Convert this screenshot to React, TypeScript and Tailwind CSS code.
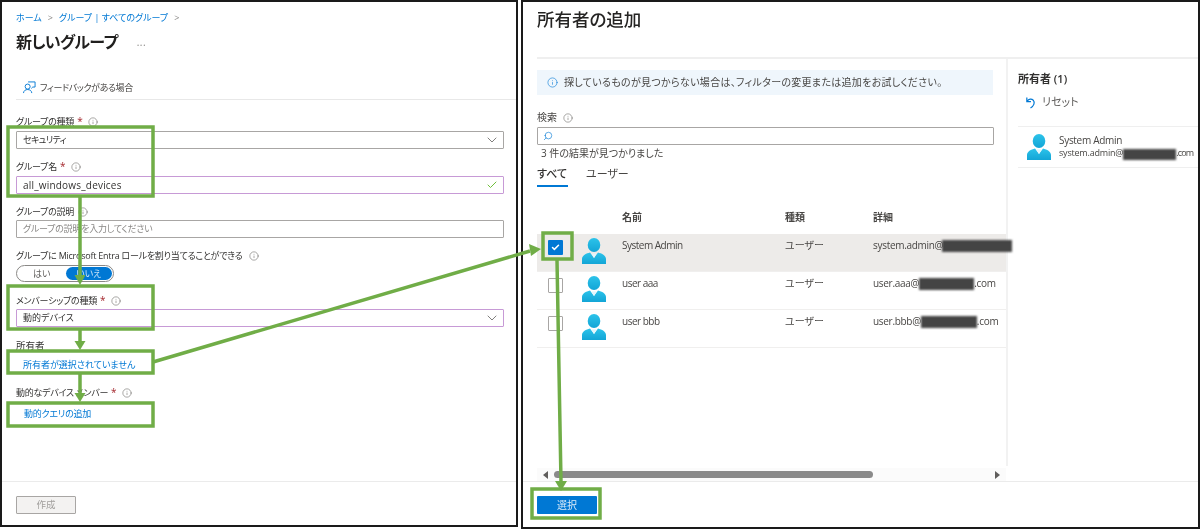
import React from "react";
import { ChevronDown, Check, Info, Search } from "lucide-react";

const font = { fontFamily: '"Open Sans","Noto Sans CJK JP",sans-serif' };

function Tip({ className = "" }: { className?: string }) {
  return <Info className={`w-[10px] h-[10px] text-[#605e5c] shrink-0 ${className}`} strokeWidth={1.3} />;
}

function Label({ text, required, gap = "ml-[6px]" }: { text: string; required?: boolean; gap?: string }) {
  return (
    <div className="flex items-center h-[13px] text-[9px] leading-[13px] text-[#323130] tracking-[-0.25px]">
      <span>{text}</span>
      {required && <span className="text-[#a4262c] ml-[3px] text-[10px]">*</span>}
      <Tip className={gap} />
    </div>
  );
}

function Box({ children, purple, right }: { children?: React.ReactNode; purple?: boolean; right?: React.ReactNode }) {
  return (
    <div className={`h-[18px] w-[488px] flex items-center justify-between pl-[6px] pr-[3px] border rounded-[1px] text-[9px] ${purple ? "border-[#c79ad6]" : "border-[#a8a6a4]"}`}>
      <span className="text-[#323130]">{children}</span>
      {right}
    </div>
  );
}

function Avatar({ className = "" }: { className?: string }) {
  return (
    <svg viewBox="0 0 24 26" className={`w-[24px] h-[26px] shrink-0 ${className}`}>
      <defs>
        <linearGradient id="av" x1="0" y1="0" x2="0" y2="1">
          <stop offset="0" stopColor="#2cc3ea" />
          <stop offset="1" stopColor="#13a5d6" />
        </linearGradient>
      </defs>
      <ellipse cx="12" cy="7" rx="6.300" ry="7" fill="url(#av)" />
      <path d="M0 26V21C0 17.500 4 15.500 8 14.500L12 20L16 14.500C20 15.500 24 17.500 24 21V26Z" fill="url(#av)" />
      <path d="M9.500 15.500H14.500L12 20Z" fill="#e4f6fc" />
    </svg>
  );
}

function Redact({ w, className = "" }: { w: number; className?: string }) {
  return <span className={`inline-block h-[12px] bg-[#444] blur-[1px] align-middle ${className}`} style={{ width: w }} />;
}

function UserRow({ name, email, selected }: { name: string; email: React.ReactNode; selected?: boolean }) {
  return (
    <div className={`h-[38px] flex items-start border-b border-[#f0efee] ${selected ? "bg-[#edebe9]" : ""}`}>
      <div className="w-[11px] shrink-0" />
      <div className={`w-[15px] h-[15px] mt-[6px] shrink-0 rounded-[1px] flex items-center justify-center ${selected ? "bg-[#0078d4]" : "border border-[#a8a6a4]"}`}>
        {selected && <Check className="w-[9px] h-[9px] text-white" strokeWidth={4} />}
      </div>
      <Avatar className="ml-[19px] mt-[4px]" />
      <div className="ml-[16px] w-[163px] shrink-0 mt-[4px] text-[10px] leading-[14px] text-[#484644] tracking-[-0.5px]">{name}</div>
      <div className="w-[88px] shrink-0 mt-[4px] text-[10px] leading-[14px] text-[#484644]">ユーザー</div>
      <div className="mt-[4px] text-[10px] leading-[14px] text-[#484644] whitespace-nowrap tracking-[-0.3px]">{email}</div>
    </div>
  );
}

function Annotations() {
  const g = "#70ad47";
  return (
    <svg className="absolute left-0 top-0 w-[1200px] h-[529px] pointer-events-none" viewBox="0 0 1200 529" fill="none">
      <g stroke={g} strokeWidth="3.500">
        <rect x="8" y="127" width="145" height="69" />
        <rect x="8" y="286" width="145" height="43" />
        <rect x="8" y="351" width="145" height="22" />
        <rect x="8" y="403" width="145" height="23" />
        <rect x="543" y="233" width="29" height="26" />
        <rect x="532" y="489" width="68" height="29" />
        <path d="M80 197V276M80 329V342M80 373V394M153 362L530 251M557 260L561 482" />
      </g>
      <g fill={g}>
        <path d="M74.500 275H85.500L80 285Z" />
        <path d="M74.500 341H85.500L80 350Z" />
        <path d="M74.500 393H85.500L80 402Z" />
        <path d="M529 244L541 249L531 256Z" />
        <path d="M555 481H567L561 491Z" />
      </g>
    </svg>
  );
}

export default function App() {
  return (
    <div className="relative w-[1200px] h-[529px] bg-white overflow-hidden flex text-[#323130] [font-feature-settings:'palt']" style={font}>
      {/* Left panel */}
      <section className="w-[518px] h-[527px] border-2 border-[#1a1a1a] flex flex-col shrink-0 blur-[0.35px]">
        <div className="flex-1 pl-[14px]">
          <div className="mt-[9px] flex items-center h-[14px] text-[9px] text-[#0078d4]">
            <span>ホーム</span>
            <span className="mx-[6px] text-[#8a8886]">&gt;</span>
            <span>グループ | すべてのグループ</span>
            <span className="mx-[6px] text-[#8a8886]">&gt;</span>
          </div>
          <div className="mt-[5px] flex items-center h-[24px]">
            <h1 className="text-[16px] font-semibold leading-[24px] text-[#201f1e] tracking-[-0.6px]">新しいグループ</h1>
            <span className="ml-[19px] text-[10px] text-[#8a8886] tracking-[0.5px]">...</span>
          </div>
          <div className="mt-[27px] h-[19px] border-b border-[#e8e8e8] flex items-start pl-[7px]">
            <svg viewBox="0 0 14 14" className="w-[13px] h-[13px] text-[#0078d4] shrink-0" fill="none" stroke="currentColor" strokeWidth="1">
              <circle cx="5" cy="6" r="2.700" />
              <path d="M0.500 13C0.800 10.500 2.500 9.200 5 9.200S9.200 10.500 9.500 13M5.500 1H13V6.500H10.500L9 8" />
            </svg>
            <span className="ml-[4px] text-[9px] leading-[13px] text-[#484644] tracking-[-0.4px]">フィードバックがある場合</span>
          </div>
          <div className="mt-[15px]"><Label text="グループの種類" required /></div>
          <div className="mt-[3px]">
            <Box right={<ChevronDown className="w-[16px] h-[16px] text-[#605e5c]" strokeWidth={1.2} />}><span className="tracking-[-0.6px]">セキュリティ</span></Box>
          </div>
          <div className="mt-[11px]"><Label text="グループ名" required /></div>
          <div className="mt-[3px]">
            <Box purple right={<Check className="w-[12px] h-[12px] mr-[2px] text-[#6fbf3a]" strokeWidth={2} />}>
              <span className="text-[10px] tracking-[0.2px]">all_windows_devices</span>
            </Box>
          </div>
          <div className="mt-[11px]"><Label text="グループの説明" gap="ml-[4px]" /></div>
          <div className="mt-[2px]">
            <Box><span className="text-[#8a8886] tracking-[-0.25px]">グループの説明を入力してください</span></Box>
          </div>
          <div className="mt-[11px]"><Label text="グループに Microsoft Entra ロールを割り当てることができる" /></div>
          <div className="mt-[3px] w-[98px] h-[17px] rounded-full border border-[#8a8886] flex items-center text-[9px] p-[1px]">
            <span className="w-[48px] text-center text-[#605e5c]">はい</span>
            <span className="w-[47px] h-[13px] leading-[13px] rounded-full bg-[#0078d4] text-center text-[#cfe6f8]">いいえ</span>
          </div>
          <div className="mt-[12px]"><Label text="メンバーシップの種類" required /></div>
          <div className="mt-[2px]">
            <Box purple right={<ChevronDown className="w-[16px] h-[16px] text-[#605e5c]" strokeWidth={1.2} />}>動的デバイス</Box>
          </div>
          <div className="mt-[12px] h-[13px] text-[9.500px] leading-[13px]">所有者</div>
          <div className="mt-[6px] ml-[7px] h-[13px] text-[9px] leading-[13px] text-[#0078d4]">所有者が選択されていません</div>
          <div className="mt-[15px]"><Label text="動的なデバイス メンバー" required /></div>
          <div className="mt-[8px] ml-[8px] h-[13px] text-[9px] leading-[13px] text-[#0078d4] tracking-[-0.2px]">動的クエリの追加</div>
        </div>
        <div className="h-[44px] shrink-0 border-t border-[#ebebeb] pl-[14px] pt-[14px]">
          <div className="w-[60px] h-[18px] bg-[#f3f2f1] border border-[#a8a6a4] rounded-[1px] flex items-center justify-center text-[9.500px] text-[#a19f9d]">作成</div>
        </div>
      </section>

      {/* Right panel */}
      <section className="ml-[3px] flex-1 h-[529px] border-2 border-[#1a1a1a] flex flex-col blur-[0.35px]">
        <div className="h-[57px] shrink-0 ml-[14px] border-b-2 border-[#efefef] pt-[4px]">
          <h2 className="text-[17.500px] leading-[26px] font-medium text-[#252423]">所有者の追加</h2>
        </div>
        <div className="flex-1 min-h-0 flex">
          <div className="w-[469px] shrink-0 ml-[14px] flex flex-col">
            <div className="mt-[11px] w-[456px] h-[25px] bg-[#eff6fc] flex items-center pl-[10px] text-[10px] text-[#484644] tracking-[0.3px]">
              <Info className="w-[11px] h-[11px] text-[#0078d4] mr-[6px] shrink-0" strokeWidth={1.3} />
              <span>探しているものが見つからない場合は、フィルターの変更または追加をお試しください。</span>
            </div>
            <div className="mt-[16px] flex items-center h-[13px] text-[10px] text-[#484644]">
              <span>検索</span>
              <Tip className="ml-[6px]" />
            </div>
            <div className="mt-[3px] w-[457px] h-[18px] border border-[#a8a6a4] rounded-[1px] flex items-center pl-[5px]">
              <Search className="w-[10px] h-[10px] text-[#0078d4] -scale-x-100" strokeWidth={1.5} />
            </div>
            <div className="mt-[1px] ml-[4px] h-[14px] text-[10px] leading-[14px] text-[#484644]">3 件の結果が見つかりました</div>
            <div className="mt-[6px] flex h-[22px] text-[11px] text-[#484644]">
              <div className="w-[31px] h-[21px] border-b-2 border-[#0078d4] font-medium text-[#323130] whitespace-nowrap">すべて</div>
              <div className="ml-[18px]">ユーザー</div>
            </div>
            <div className="mt-[22px] h-[15px] flex text-[10px] leading-[14px] font-semibold text-[#484644]">
              <span className="ml-[85px] w-[163px]">名前</span>
              <span className="w-[88px]">種類</span>
              <span>詳細</span>
            </div>
            <div className="mt-[9px]">
              <UserRow selected name="System Admin" email={<>system.admin@e<Redact w={70} className="-ml-[7px] -mt-[1px]" /></>} />
              <UserRow name="user aaa" email={<>user.aaa@<Redact w={55} />.com</>} />
              <UserRow name="user bbb" email={<>user.bbb@<Redact w={56} />.com</>} />
            </div>
            <div className="mt-auto h-[13px] flex items-center pr-[6px] pl-[6px] bg-[#fbfbfb]">
              <span className="w-0 h-0 border-y-[4px] border-y-transparent border-r-[5px] border-r-[#605e5c]" />
              <span className="ml-[6px] w-[319px] h-[7px] rounded-full bg-[#8a8a8a]" />
              <span className="ml-auto w-0 h-0 border-y-[4px] border-y-transparent border-l-[5px] border-l-[#605e5c]" />
            </div>
          </div>
          <aside className="flex-1 border-l-2 border-[#f2f2f2] mb-[15px] pl-[10px]">
            <div className="mt-[12px] h-[15px] text-[11px] leading-[15px] font-semibold text-[#323130]">所有者 (1)</div>
            <div className="mt-[9px] ml-[7px] h-[14px] flex items-center text-[11px] text-[#605e5c]">
              <svg viewBox="0 0 12 14" className="w-[11px] h-[13px] text-[#0078d4] shrink-0" fill="none" stroke="currentColor" strokeWidth="1.300">
                <path d="M2 1.500V6H6.500M2.500 5.500C4 3 7 2.500 9 4.500C11 7 10 10.500 6 13" />
              </svg>
              <span className="ml-[6px]">リセット</span>
            </div>
            <div className="mt-[17px] h-[42px] border-y border-[#efefef] flex items-center pl-[9px]">
              <Avatar />
              <div className="ml-[8px] text-[#484644]">
                <div className="text-[10px] leading-[12px] font-medium tracking-[-0.3px]">System Admin</div>
                <div className="text-[9px] leading-[13px] whitespace-nowrap tracking-[-0.2px]">system.admin@<Redact w={53} className="!h-[11px]" /><span className="tracking-[-0.8px]">.com</span></div>
              </div>
            </div>
          </aside>
        </div>
        <div className="h-[46px] shrink-0 border-t border-[#ebebeb] pl-[14px] pt-[14px]">
          <div className="w-[60px] h-[18px] bg-[#0078d4] rounded-[1px] flex items-center justify-center text-[10px] text-[#dcecf9]">選択</div>
        </div>
      </section>

      <Annotations />
    </div>
  );
}
